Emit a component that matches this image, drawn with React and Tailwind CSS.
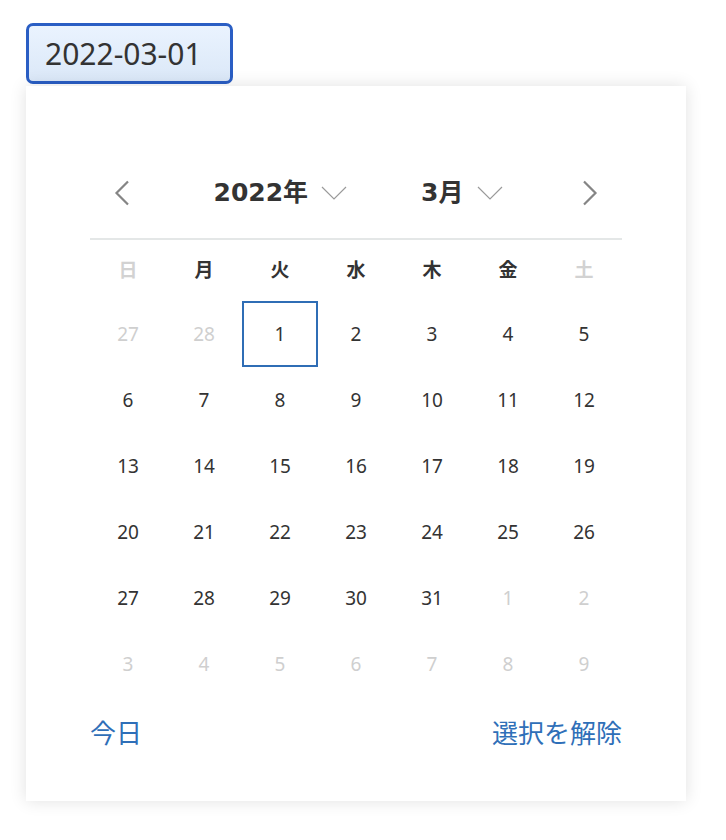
const weekdays = [
  { label: '日', muted: true },
  { label: '月' },
  { label: '火' },
  { label: '水' },
  { label: '木' },
  { label: '金' },
  { label: '土', muted: true },
];

const buildDays = () => {
  const days = [];
  [27, 28].forEach((d) => days.push({ d, other: true }));
  for (let d = 1; d <= 31; d++) days.push({ d, selected: d === 1 });
  for (let d = 1; days.length < 42; d++) days.push({ d, other: true });
  return days;
};

const Arrow = ({ dir }) => (
  <svg width="16" height="26" viewBox="0 0 16 26" fill="none">
    <path
      d={dir === 'left' ? 'M14 1.5 L2.5 13 L14 24.5' : 'M2 1.5 L13.5 13 L2 24.5'}
      stroke="#858585"
      strokeWidth="2.2"
    />
  </svg>
);

const Caret = () => (
  <svg width="26" height="14" viewBox="0 0 26 14" fill="none">
    <path d="M1 1 L13 13 L25 1" stroke="#9a9a9a" strokeWidth="1.2" />
  </svg>
);

const App = () => {
  const days = buildDays();
  const sans = { fontFamily: '"Noto Sans", "Noto Sans CJK JP", sans-serif' };
  const bold = { fontFamily: '"DejaVu Sans", "Noto Sans CJK JP", sans-serif' };

  return (
    <div className="min-h-screen w-[726px] bg-white pl-[26px] pt-[23px]" style={sans}>
      <div className="flex h-[61px] w-[207px] items-center rounded-[7px] border-[3px] border-[#2a5ec4] bg-gradient-to-b from-[#eaf3fe] to-[#dbe8f8] pl-[16px] text-[30px] text-[#333]">
        2022-03-01
      </div>

      <div className="mt-[2px] w-[660px] bg-white px-[64px] pb-[46px] pt-[82px] shadow-[0_0_16px_rgba(0,0,0,0.12)]">
        <div className="flex h-[50px] items-center">
          <button className="flex w-[64px] items-center justify-center">
            <Arrow dir="left" />
          </button>
          <div className="flex flex-1 items-center justify-center gap-[74px] text-[25px] font-bold text-[#333]">
            <div className="flex items-center gap-[13px] pl-[4px]">
              <span style={bold}>2022年</span>
              <Caret />
            </div>
            <div className="flex items-center gap-[13px]">
              <span style={bold}>3月</span>
              <Caret />
            </div>
          </div>
          <button className="flex w-[64px] items-center justify-center">
            <Arrow dir="right" />
          </button>
        </div>

        <div className="mt-[20px] h-[2px] bg-[#e4e7e7]" />

        <div className="grid grid-cols-7">
          {weekdays.map((w) => (
            <div
              key={w.label}
              className={`flex h-[61px] items-center justify-center text-[19px] font-bold ${
                w.muted ? 'text-[#d2d2d2]' : 'text-[#333]'
              }`}
            >
              {w.label}
            </div>
          ))}
          {days.map((day, i) => (
            <div
              key={i}
              className={`flex h-[66px] items-center justify-center text-[19px] ${
                day.other ? 'text-[#cfcfcf]' : 'text-[#333]'
              }`}
            >
              {day.selected ? (
                <span className="flex h-[66px] w-[76px] items-center justify-center border-2 border-[#2f6db5]">
                  {day.d}
                </span>
              ) : (
                day.d
              )}
            </div>
          ))}
        </div>

        <div className="mt-[14px] flex h-[44px] items-center justify-between text-[26px] text-[#2f6fb8]">
          <button>今日</button>
          <button>選択を解除</button>
        </div>
      </div>
    </div>
  );
};

export default App;
